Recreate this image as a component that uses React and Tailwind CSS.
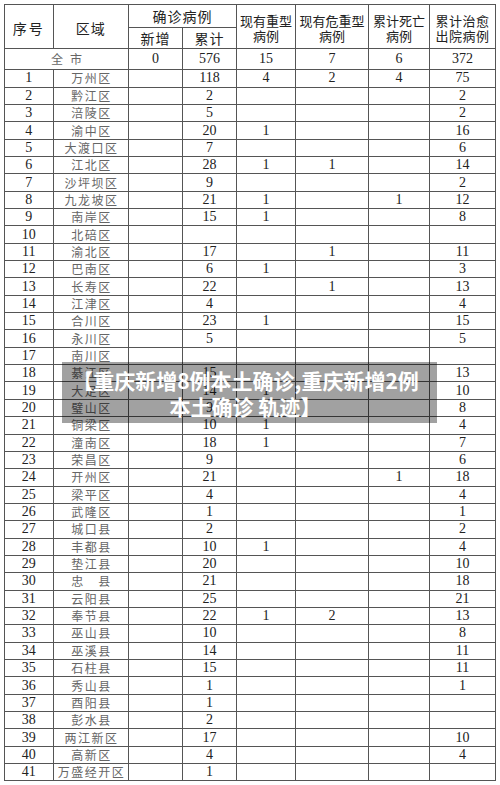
import React from "react";

const rows = [
  ["1", "万州区", "", "118", "4", "2", "4", "75"],
  ["2", "黔江区", "", "2", "", "", "", "2"],
  ["3", "涪陵区", "", "5", "", "", "", "2"],
  ["4", "渝中区", "", "20", "1", "", "", "16"],
  ["5", "大渡口区", "", "7", "", "", "", "6"],
  ["6", "江北区", "", "28", "1", "1", "", "14"],
  ["7", "沙坪坝区", "", "9", "", "", "", "2"],
  ["8", "九龙坡区", "", "21", "1", "", "1", "12"],
  ["9", "南岸区", "", "15", "1", "", "", "8"],
  ["10", "北碚区", "", "", "", "", "", ""],
  ["11", "渝北区", "", "17", "", "1", "", "11"],
  ["12", "巴南区", "", "6", "1", "", "", "3"],
  ["13", "长寿区", "", "22", "", "1", "", "13"],
  ["14", "江津区", "", "4", "", "", "", "4"],
  ["15", "合川区", "", "23", "1", "", "", "15"],
  ["16", "永川区", "", "5", "", "", "", "5"],
  ["17", "南川区", "", "", "", "", "", ""],
  ["18", "綦江区", "", "15", "", "", "", "13"],
  ["19", "大足区", "", "14", "1", "", "", "10"],
  ["20", "璧山区", "", "9", "", "", "", "8"],
  ["21", "铜梁区", "", "10", "1", "", "", "4"],
  ["22", "潼南区", "", "18", "1", "", "", "7"],
  ["23", "荣昌区", "", "9", "", "", "", "6"],
  ["24", "开州区", "", "21", "", "", "1", "18"],
  ["25", "梁平区", "", "4", "", "", "", "4"],
  ["26", "武隆区", "", "1", "", "", "", "1"],
  ["27", "城口县", "", "2", "", "", "", "2"],
  ["28", "丰都县", "", "10", "1", "", "", "4"],
  ["29", "垫江县", "", "20", "", "", "", "10"],
  ["30", "忠\u3000县", "", "21", "", "", "", "18"],
  ["31", "云阳县", "", "25", "", "", "", "21"],
  ["32", "奉节县", "", "22", "1", "2", "", "13"],
  ["33", "巫山县", "", "10", "", "", "", "8"],
  ["34", "巫溪县", "", "14", "", "", "", "11"],
  ["35", "石柱县", "", "15", "", "", "", "11"],
  ["36", "秀山县", "", "1", "", "", "", "1"],
  ["37", "酉阳县", "", "1", "", "", "", ""],
  ["38", "彭水县", "", "2", "", "", "", ""],
  ["39", "两江新区", "", "17", "", "", "", "10"],
  ["40", "高新区", "", "4", "", "", "", "4"],
  ["41", "万盛经开区", "", "1", "", "", "", ""],
];

const serif = "font-['Liberation_Serif','Times_New_Roman',serif]";
const sans = "font-['Noto_Sans_CJK_SC','Noto_Sans',sans-serif]";

function Num({ children }) {
  return (
    <td className={`border border-[#555] text-center p-0 text-[14px] leading-none text-[#222] ${serif}`}>
      {children}
    </td>
  );
}

export default function App() {
  return (
    <div className="relative w-[500px] h-[785px] bg-white overflow-hidden">
      <div className="pt-[4px] pl-[4px]">
        <table className="border-collapse table-fixed w-[491px]">
          <colgroup>
            <col className="w-[48.5px]" />
            <col className="w-[75.5px]" />
            <col className="w-[54px]" />
            <col className="w-[54px]" />
            <col className="w-[59px]" />
            <col className="w-[73px]" />
            <col className="w-[61px]" />
            <col className="w-[66px]" />
          </colgroup>
          <thead>
            <tr className="h-[23px]">
              <th rowSpan={2} className={`border border-[#555] p-0 pt-[4px] text-[14px] font-normal tracking-[2px] text-[#222] ${sans}`}>序号</th>
              <th rowSpan={2} className={`border border-[#555] p-0 pt-[4px] text-[14px] font-normal tracking-[1px] text-[#222] ${sans}`}>区域</th>
              <th colSpan={2} className={`border border-[#555] p-0 text-[14px] font-normal tracking-[1px] text-[#222] leading-none ${sans}`}>确诊病例</th>
              <th rowSpan={2} className={`border border-[#555] p-0 pt-[3px] text-[13px] leading-[15px] font-normal text-[#222] ${sans}`}>现有重型<br />病例</th>
              <th rowSpan={2} className={`border border-[#555] p-0 pt-[3px] text-[13px] leading-[15px] font-normal text-[#222] ${sans}`}>现有危重型<br />病例</th>
              <th rowSpan={2} className={`border border-[#555] p-0 pt-[3px] text-[13px] leading-[15px] font-normal text-[#222] ${sans}`}>累计死亡<br />病例</th>
              <th rowSpan={2} className={`border border-[#555] p-0 pt-[3px] text-[13px] leading-[15px] font-normal tracking-[0.5px] text-[#222] ${sans}`}>累计治愈<br />出院病例</th>
            </tr>
            <tr className="h-[21px]">
              <th className={`border border-[#555] p-0 text-[14px] font-normal tracking-[1px] text-[#222] leading-none ${sans}`}>新增</th>
              <th className={`border border-[#555] p-0 text-[14px] font-normal tracking-[1px] text-[#222] leading-none ${sans}`}>累计</th>
            </tr>
          </thead>
          <tbody>
            <tr className="h-[21.3px]">
              <td colSpan={2} className={`border border-[#555] p-0 text-center text-[12px] leading-none tracking-[7px] pl-[7px] text-[#666] ${sans}`}>全市</td>
              <Num>0</Num>
              <Num>576</Num>
              <Num>15</Num>
              <Num>7</Num>
              <Num>6</Num>
              <Num>372</Num>
            </tr>
            {rows.map((r) => (
              <tr key={r[0]} className="h-[17.35px]">
                <Num>{r[0]}</Num>
                <td className={`border border-[#555] p-0 pl-[1.5px] text-center text-[12px] leading-none tracking-[1.5px] whitespace-nowrap text-[#666] ${sans}`}>{r[1]}</td>
                <Num>{r[2]}</Num>
                <Num>{r[3]}</Num>
                <Num>{r[4]}</Num>
                <Num>{r[5]}</Num>
                <Num>{r[6]}</Num>
                <Num>{r[7]}</Num>
              </tr>
            ))}
          </tbody>
        </table>
      </div>
      <div className="absolute left-[62px] top-[362px] w-[375px] h-[61px] bg-[rgba(0,0,0,0.37)] flex flex-col items-center justify-center pr-[8px]">
        <div className={`text-white font-bold text-[21px] leading-[26px] text-center whitespace-nowrap ${sans}`}>
          【重庆新增8例本土确诊,重庆新增2例
          <br />
          本土确诊 轨迹】
        </div>
      </div>
    </div>
  );
}
